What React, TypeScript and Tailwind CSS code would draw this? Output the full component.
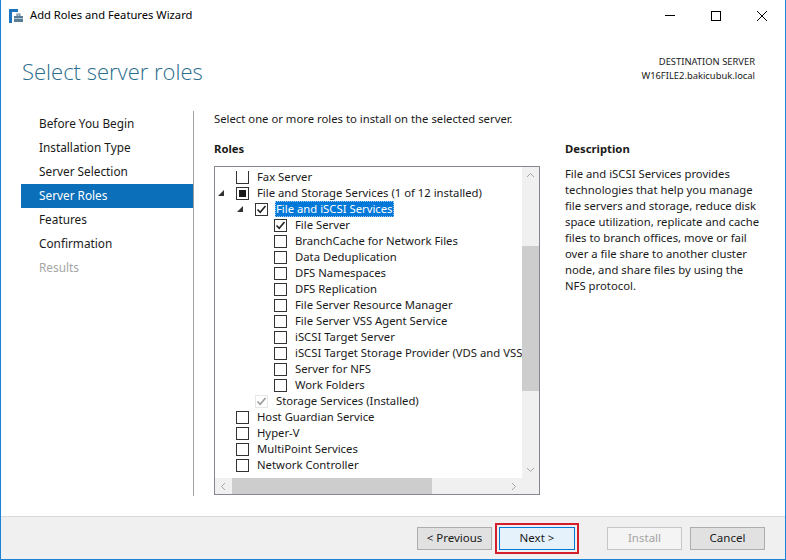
import React from 'react';

type Row = {
  label: string;
  level: 0 | 1 | 2;
  state: 'off' | 'on' | 'mixed' | 'installed';
  expander?: boolean;
  selected?: boolean;
  clipTop?: boolean;
};

const rows: Row[] = [
  { label: 'Fax Server', level: 0, state: 'off', clipTop: true },
  { label: 'File and Storage Services (1 of 12 installed)', level: 0, state: 'mixed', expander: true },
  { label: 'File and iSCSI Services', level: 1, state: 'on', expander: true, selected: true },
  { label: 'File Server', level: 2, state: 'on' },
  { label: 'BranchCache for Network Files', level: 2, state: 'off' },
  { label: 'Data Deduplication', level: 2, state: 'off' },
  { label: 'DFS Namespaces', level: 2, state: 'off' },
  { label: 'DFS Replication', level: 2, state: 'off' },
  { label: 'File Server Resource Manager', level: 2, state: 'off' },
  { label: 'File Server VSS Agent Service', level: 2, state: 'off' },
  { label: 'iSCSI Target Server', level: 2, state: 'off' },
  { label: 'iSCSI Target Storage Provider (VDS and VSS hardware providers)', level: 2, state: 'off' },
  { label: 'Server for NFS', level: 2, state: 'off' },
  { label: 'Work Folders', level: 2, state: 'off' },
  { label: 'Storage Services (Installed)', level: 1, state: 'installed' },
  { label: 'Host Guardian Service', level: 0, state: 'off' },
  { label: 'Hyper-V', level: 0, state: 'off' },
  { label: 'MultiPoint Services', level: 0, state: 'off' },
  { label: 'Network Controller', level: 0, state: 'off' },
];

const steps = [
  'Before You Begin',
  'Installation Type',
  'Server Selection',
  'Server Roles',
  'Features',
  'Confirmation',
  'Results',
];

const indentClass = ['w-[21px]', 'w-[40px]', 'w-[59px]'];

const Check = ({ color }: { color: string }) => (
  <svg width="11" height="11" viewBox="0 0 11 11">
    <path d="M1.5 5.5 L4.2 8.2 L9.5 2" fill="none" stroke={color} strokeWidth="1.6" />
  </svg>
);

const CheckBox = ({ state, clipTop }: { state: Row['state']; clipTop?: boolean }) => {
  const border =
    state === 'installed' ? 'border-[#e6e6e6]' : 'border-[#333333]';
  return (
    <div
      className={`w-[13px] h-[13px] shrink-0 border ${border} ${clipTop ? 'border-t-0' : ''} bg-white flex items-center justify-center`}
    >
      {state === 'on' && <Check color="#222" />}
      {state === 'installed' && <Check color="#9a9a9a" />}
      {state === 'mixed' && <div className="w-[7px] h-[7px] bg-[#1a1a1a]" />}
    </div>
  );
};

const Expander = () => (
  <svg width="6" height="6" viewBox="0 0 6 6" className="mr-[12px]">
    <polygon points="6,0 6,6 0,6" fill="#333" />
  </svg>
);

const Chevron = ({ dir }: { dir: 'up' | 'down' | 'left' | 'right' }) => {
  const d = {
    up: 'M1 6 L4.5 2.5 L8 6',
    down: 'M1 3 L4.5 6.5 L8 3',
    left: 'M6 1 L2.5 4.5 L6 8',
    right: 'M3 1 L6.5 4.5 L3 8',
  }[dir];
  return (
    <svg width="9" height="9" viewBox="0 0 9 9">
      <path d={d} fill="none" stroke="#a6a6a6" strokeWidth="1" />
    </svg>
  );
};

const AppIcon = () => (
  <svg width="16" height="16" viewBox="0 0 16 16">
    <rect x="1" y="1" width="3" height="14" fill="#1e73be" />
    <rect x="1" y="1" width="9" height="3" fill="#1e73be" />
    <rect x="6" y="8" width="9" height="6" fill="#5a7d95" />
    <rect x="9" y="6" width="3" height="2" fill="none" stroke="#5a7d95" strokeWidth="1" />
    <rect x="6" y="10" width="9" height="1" fill="#a9c3d6" />
  </svg>
);

export default function App() {
  return (
    <div className="w-[786px] h-[560px] flex flex-col bg-white border-x border-b border-[#1883d7] font-['Segoe_UI','Noto_Sans',sans-serif] text-[11.3px] text-black overflow-hidden">
      {/* Title bar */}
      <div className="h-[31px] flex items-center shrink-0">
        <div className="pl-[7px] pr-[6px] flex items-center">
          <AppIcon />
        </div>
        <span className="text-[11.2px] text-black">Add Roles and Features Wizard</span>
        <div className="ml-auto flex h-full">
          <div className="w-[46px] h-full flex items-center justify-center">
            <div className="w-[10px] h-px bg-black" />
          </div>
          <div className="w-[46px] h-full flex items-center justify-center">
            <div className="w-[10px] h-[10px] border border-black" />
          </div>
          <div className="w-[46px] h-full flex items-center justify-center">
            <svg width="10" height="10" viewBox="0 0 10 10">
              <path d="M0 0 L10 10 M10 0 L0 10" stroke="#000" strokeWidth="1" />
            </svg>
          </div>
        </div>
      </div>

      {/* Header */}
      <div className="h-[80px] shrink-0 flex justify-between pl-[21px] pr-[30px]">
        <h1 className="pt-[24px] font-['Open_Sans','Noto_Sans',sans-serif] font-light text-[22px] text-[#2a6d8c]">
          Select server roles
        </h1>
        <div className="pt-[24px] text-right text-[9.4px] leading-[14px] text-[#1a1a1a]">
          <div>DESTINATION SERVER</div>
          <div>W16FILE2.bakicubuk.local</div>
        </div>
      </div>

      {/* Body */}
      <div className="flex-1 flex pb-[20px]">
        <nav className="ml-[20px] w-[173px] pt-[1px] border-r border-[#a0a0a0] shrink-0">
          {steps.map((s) => (
            <div
              key={s}
              className={`h-[24px] flex items-center pl-[18px] text-[11.8px] ${
                s === 'Server Roles'
                  ? 'bg-[#0c6fba] text-white'
                  : s === 'Results'
                  ? 'text-[#a6a6a6]'
                  : 'text-[#1a1a1a]'
              }`}
            >
              {s}
            </div>
          ))}
        </nav>

        <div className="flex-1 pl-[20px] flex flex-col">
          <div className="h-[16px] flex items-center text-[#1a1a1a]">
            Select one or more roles to install on the selected server.
          </div>
          <div className="flex flex-1">
            <div className="w-[326px] flex flex-col">
              <div className="mt-[14px] h-[16px] flex items-center font-bold text-[#1a1a1a]">Roles</div>
              <div className="mt-[9px] h-[329px] border border-[#828790] flex flex-col">
                <div className="flex flex-1 min-h-0">
                  <div className="flex-1 overflow-hidden pt-[2px]">
                    {rows.map((r) => (
                      <div key={r.label} className="h-[16px] flex items-center whitespace-nowrap">
                        <div className={`${indentClass[r.level]} h-full shrink-0 flex items-center justify-end`}>
                          {r.expander && <Expander />}
                        </div>
                        <CheckBox state={r.state} clipTop={r.clipTop} />
                        <span
                          className={`ml-[7px] px-px h-[16px] flex items-center ${
                            r.selected
                              ? 'bg-[#0078d7] text-white outline outline-1 outline-dotted outline-[#9ec8ee] -outline-offset-1'
                              : 'text-[#1a1a1a]'
                          }`}
                        >
                          {r.label}
                        </span>
                      </div>
                    ))}
                  </div>
                  {/* vertical scrollbar */}
                  <div className="w-[17px] bg-[#f0f0f0] flex flex-col shrink-0">
                    <div className="h-[17px] flex items-center justify-center">
                      <Chevron dir="up" />
                    </div>
                    <div className="h-[62px]" />
                    <div className="h-[145px] bg-[#cdcdcd]" />
                    <div className="flex-1" />
                    <div className="h-[17px] flex items-center justify-center">
                      <Chevron dir="down" />
                    </div>
                  </div>
                </div>
                {/* horizontal scrollbar */}
                <div className="h-[16px] flex shrink-0 bg-[#f0f0f0]">
                  <div className="w-[17px] flex items-center justify-center">
                    <Chevron dir="left" />
                  </div>
                  <div className="w-[200px] bg-[#cdcdcd]" />
                  <div className="flex-1" />
                  <div className="w-[17px] flex items-center justify-center">
                    <Chevron dir="right" />
                  </div>
                  <div className="w-[17px]" />
                </div>
              </div>
            </div>

            <div className="ml-[25px] w-[200px]">
              <div className="mt-[14px] h-[16px] flex items-center font-bold text-[#1a1a1a]">Description</div>
              <p className="mt-[9px] leading-[16px] text-[#1a1a1a]">
                File and iSCSI Services provides technologies that help you manage file servers and
                storage, reduce disk space utilization, replicate and cache files to branch offices,
                move or fail over a file share to another cluster node, and share files by using the
                NFS protocol.
              </p>
            </div>
          </div>
        </div>
      </div>

      {/* Footer */}
      <div className="h-[43px] shrink-0 bg-[#f0f0f0] border-t border-[#dadada] flex items-center pl-[416px]">
        <button className="w-[75px] h-[23px] bg-[#e1e1e1] border border-[#adadad] text-[11.5px] text-[#1a1a1a]">
          &lt; Previous
        </button>
        <div className="ml-[3px] p-[2px] border-2 border-[#d21f2c]">
          <button className="w-[76px] h-[23px] bg-[#e5f1fb] border border-[#0078d7] text-[11.5px] text-[#1a1a1a]">
            Next &gt;
          </button>
        </div>
        <button className="ml-[28px] w-[75px] h-[23px] bg-[#f4f4f4] border border-[#c6c6c6] text-[11.5px] text-[#a3a3a3]">
          Install
        </button>
        <button className="ml-[8px] w-[75px] h-[23px] bg-[#e1e1e1] border border-[#adadad] text-[11.5px] text-[#1a1a1a]">
          Cancel
        </button>
      </div>
    </div>
  );
}
